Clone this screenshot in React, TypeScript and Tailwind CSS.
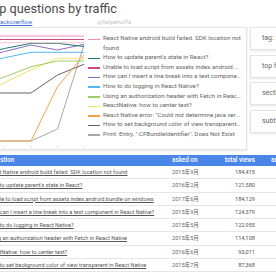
import React from "react";

interface Series {
    name: string
    color: string
    points: string
}

const series: Series[] = [
    { name: "React Native android build failed. SDK location not found", color: "#f48fb1", points: "-23,36 3.5,36 30,36 56.5,36 83,36" },
    { name: "How to update parent's state in React?", color: "#1b7a6e", points: "-23,55 3.5,48.5 30,43.3 56.5,43.3 83,46.5" },
    { name: "Unable to load script from assets index.android.bundle on windows", color: "#d0457a", points: "-23,39.5 3.5,39.5 30,39.5 56.5,39.5 83,39.5" },
    { name: "How can I insert a line break into a text component in React Native?", color: "#8a6cc8", points: "-23,58 3.5,51.5 30,45 56.5,50 83,44.3" },
    { name: "How to do logging in React Native?", color: "#4fb8ee", points: "-23,64 3.5,57.7 30,52.3 56.5,52.3 83,52.3" },
    { name: "Using an authorization header with Fetch in React Native", color: "#9ccc65", points: "-23,86 3.5,77 30,66.7 56.5,61 83,61" },
    { name: "ReactNative: how to center text?", color: "#f2e36b", points: "-23,96 3.5,82.5 30,70 56.5,58.3 83,58.3" },
    { name: "React Native error: \"Could not determine java version from '9.0.1'\"", color: "#f4a14a", points: "-23,141 3.5,141 30,141 56.5,86.7 83,55" },
    { name: "How to set background color of view transparent in React Native", color: "#6b5f6d", points: "-23,93 3.5,93 30,93 56.5,75 83,64.3" },
    { name: "Print: Entry, \":CFBundleIdentifier\", Does Not Exist", color: "#a8a8a8", points: "-23,141 3.5,141 30,141 56.5,129 83,45" },
];

const rows = [
    { q: "React Native android build failed. SDK location not found", asked: "2015年9月", views: "184,415" },
    { q: "How to update parent's state in React?", asked: "2016年2月", views: "121,580" },
    { q: "Unable to load script from assets index.android.bundle on windows", asked: "2017年6月", views: "184,129" },
    { q: "How can I insert a line break into a text component in React Native?", asked: "2015年9月", views: "124,379" },
    { q: "How to do logging in React Native?", asked: "2015年5月", views: "122,955" },
    { q: "Using an authorization header with Fetch in React Native", asked: "2015年5月", views: "114,108" },
    { q: "ReactNative: how to center text?", asked: "2016年6月", views: "93,011" },
    { q: "How to set background color of view transparent in React Native", asked: "2015年7月", views: "87,368" },
];

const controls = ["tag: react-native", "top filters", "section", "subtitle"];

export default function App() {
    return (
        <div className="w-[276px] h-[276px] overflow-hidden bg-white flex flex-col font-[Roboto,'Noto_Sans_CJK_JP',sans-serif] text-[#666]">
            {/* header */}
            <div className="h-[17px] -ml-[15px] text-[12.7px] leading-[17px] text-[#4a4a4a] whitespace-nowrap">
                Top questions by traffic
            </div>
            <div className="h-[9px] flex items-center whitespace-nowrap text-[6px] leading-[9px]">
                <span className="-ml-[5px] w-[102px] text-[#3b6fd6] underline">stackoverflow</span>
                <span className="text-[#c4c4c4]">@felipehoffa</span>
            </div>

            {/* chart + controls */}
            <div className="mt-[1px] flex items-start">
                <div className="-ml-[20px] w-[267px] h-[123px] shrink-0 bg-white border border-[#e4e4e4] shadow-[0_1px_2px_rgba(0,0,0,0.1)] flex">
                    <svg width="106" height="121" viewBox="-20 28 106 121" className="shrink-0">
                        {series.slice().reverse().map((s) => (
                            <polyline key={s.name} points={s.points} fill="none" stroke={s.color} strokeWidth="1" />
                        ))}
                        <polyline points="-23,42.7 3.5,42.7 30,42.7 56.5,42.7 83,42.7" fill="none" stroke="#f6c5d4" strokeWidth="1" />
                        {[3.5, 30, 56.5, 83].map((x) => (
                            <text key={x} x={x} y="149" fontSize="3.5" fill="#c8c8c8" textAnchor="middle">'1</text>
                        ))}
                    </svg>
                    <div className="flex flex-col pt-[6px] pl-[1px] w-[158px] text-[6.2px] leading-[9.6px]">
                        {series.map((s, i) => (
                            <div className="flex items-start" key={s.name}>
                                <span className="w-[12px] h-[1.5px] mt-[4.5px] shrink-0" style={{ backgroundColor: s.color }} />
                                <span className={i === 0 ? "pl-[3px] w-[142px]" : "pl-[3px] w-[142px] truncate"}>{s.name}</span>
                            </div>
                        ))}
                    </div>
                </div>
                <div className="ml-[3px] flex flex-col gap-[4.5px]">
                    {controls.map((c) => (
                        <div className="w-[40px] h-[23px] flex items-center pl-[11px] bg-white border border-[#e4e4e4] shadow-[0_1px_2px_rgba(0,0,0,0.1)] text-[7px] text-[#666] whitespace-nowrap overflow-hidden" key={c}>
                            {c}
                        </div>
                    ))}
                </div>
            </div>

            {/* table */}
            <div className="mt-[5px] w-[320px]">
                <div className="h-[11px] bg-[#4a86e8] text-white text-[6.3px] font-medium grid grid-cols-[172px_52px_31px_40px] items-center whitespace-nowrap">
                    <span className="-ml-[11px]">Question</span>
                    <span>asked on</span>
                    <span className="text-right">total views</span>
                    <span className="pl-[16px]">answers</span>
                </div>
                {rows.map((r) => (
                    <div className="h-[13.3px] text-[5.6px] grid grid-cols-[172px_52px_31px_40px] items-center whitespace-nowrap border-b border-[#e6e6e6]" key={r.q}>
                        <span className="overflow-hidden">
                            <span className="block -ml-[13px] underline text-[#555]">{r.q}</span>
                        </span>
                        <span className="text-[#666]">{r.asked}</span>
                        <span className="text-right text-[#555]">{r.views}</span>
                        <span />
                    </div>
                ))}
            </div>
        </div>
    );
}
